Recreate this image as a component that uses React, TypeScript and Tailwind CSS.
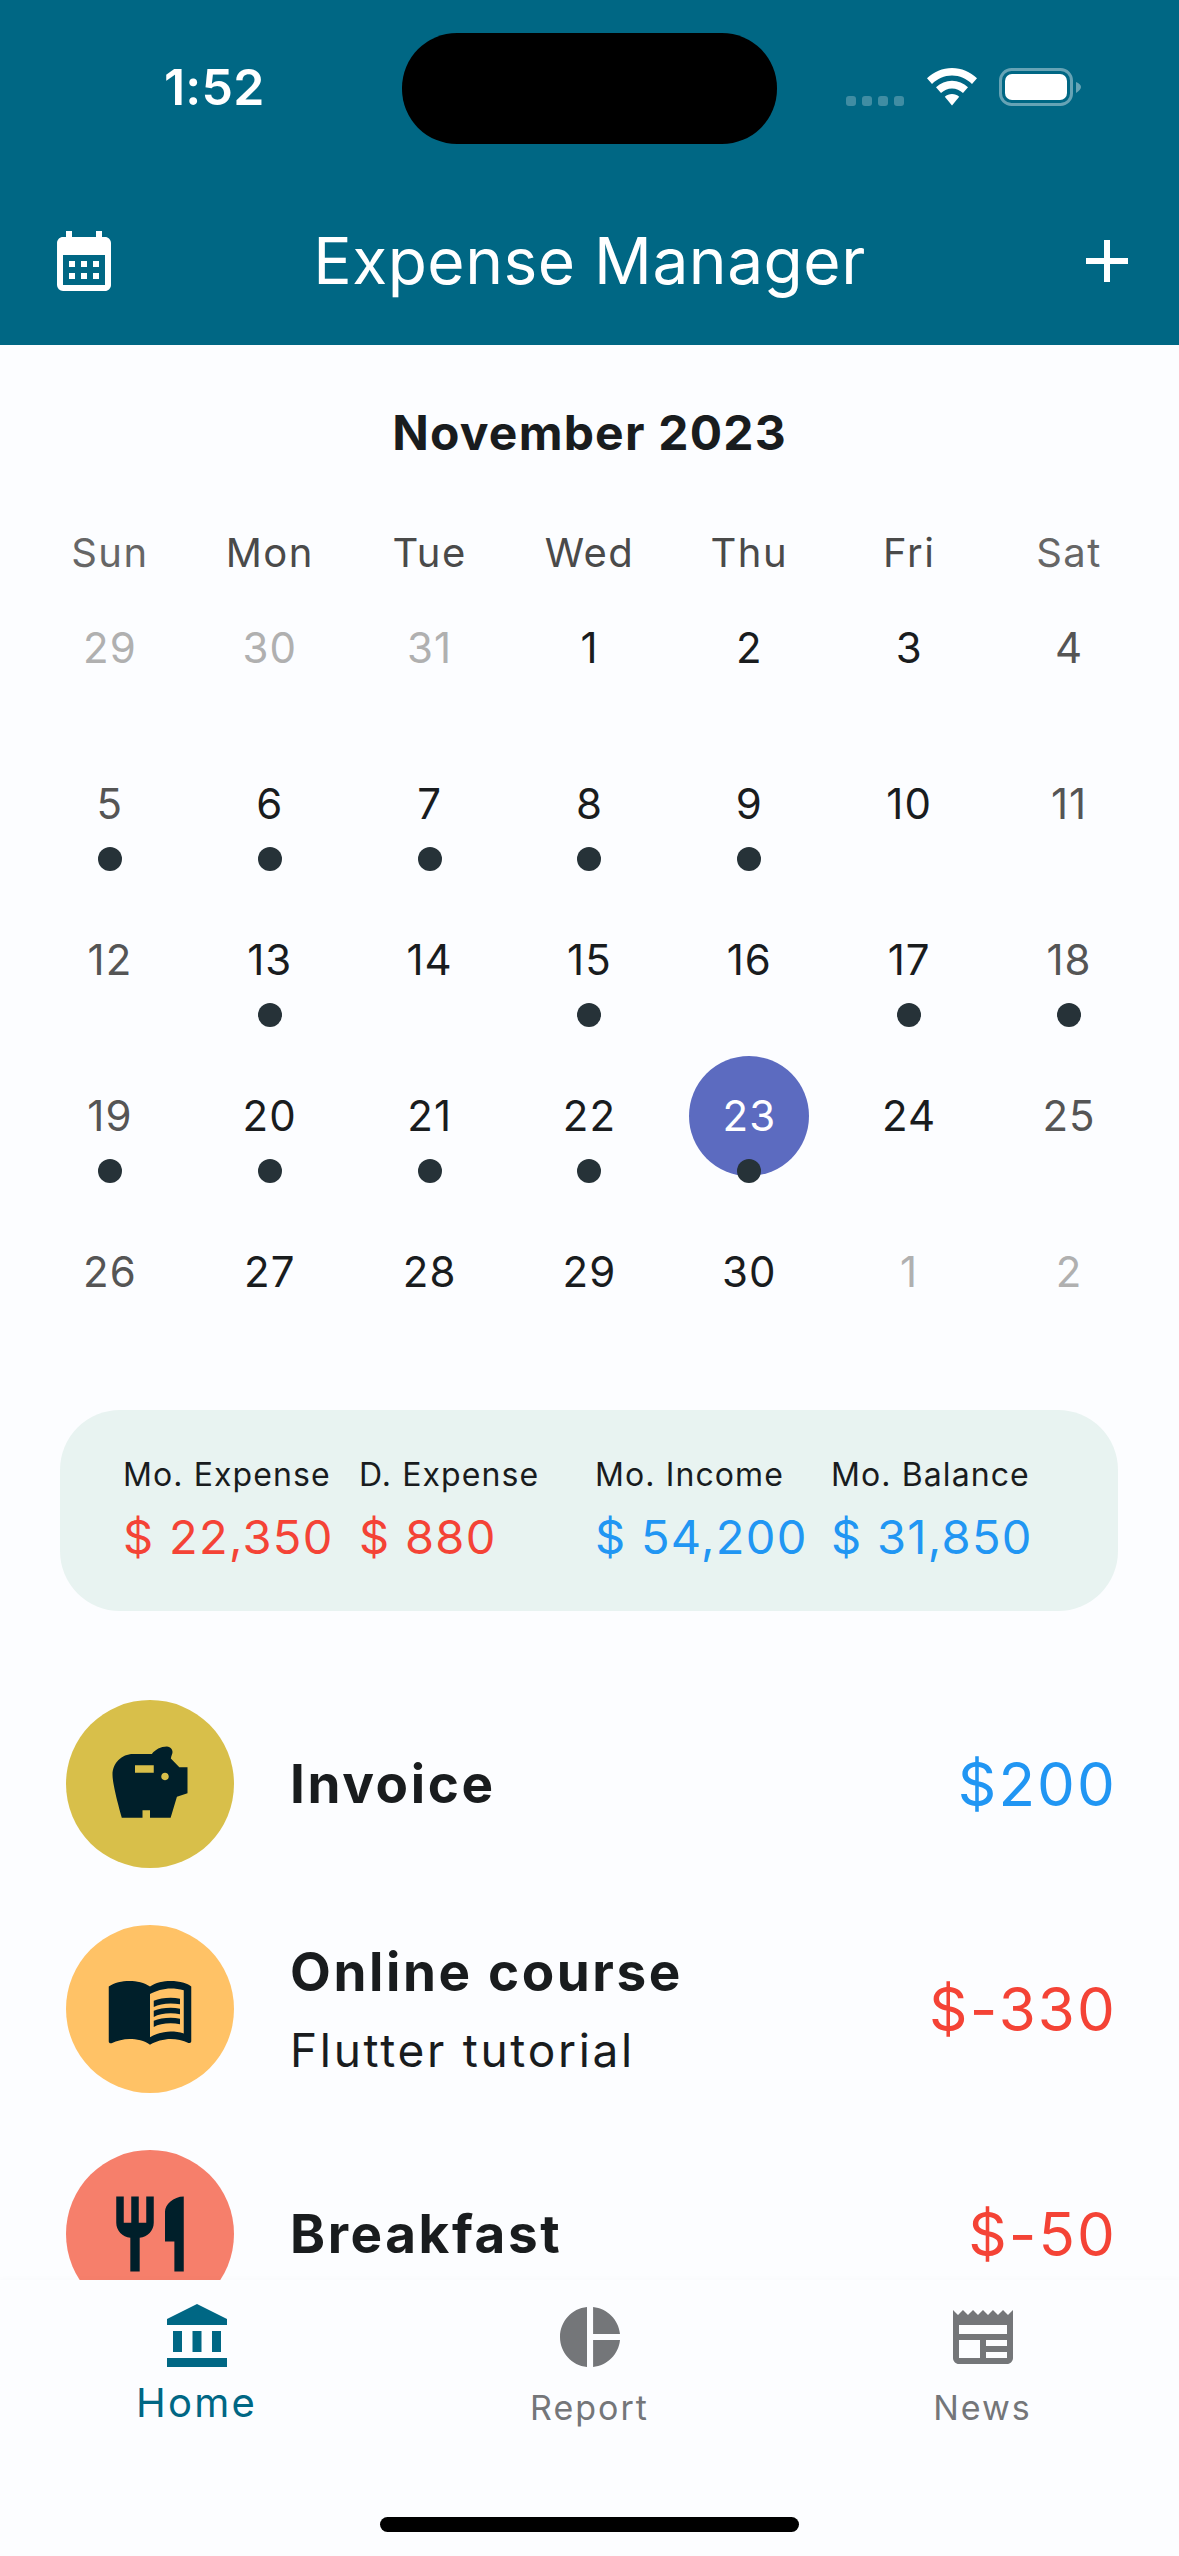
import React from "react";
import {
  MdCalendarMonth,
  MdAdd,
  MdSavings,
  MdMenuBook,
  MdRestaurant,
  MdAccountBalance,
  MdPieChart,
  MdNewspaper,
} from "react-icons/md";

const WEEK_DAYS = ["Sun", "Mon", "Tue", "Wed", "Thu", "Fri", "Sat"];

type Day = { label: string; muted?: boolean; dot?: boolean; selected?: boolean };

const DAYS: Day[] = [
  { label: "29", muted: true },
  { label: "30", muted: true },
  { label: "31", muted: true },
  { label: "1" },
  { label: "2" },
  { label: "3" },
  { label: "4" },
  { label: "5", dot: true },
  { label: "6", dot: true },
  { label: "7", dot: true },
  { label: "8", dot: true },
  { label: "9", dot: true },
  { label: "10" },
  { label: "11" },
  { label: "12" },
  { label: "13", dot: true },
  { label: "14" },
  { label: "15", dot: true },
  { label: "16" },
  { label: "17", dot: true },
  { label: "18", dot: true },
  { label: "19", dot: true },
  { label: "20", dot: true },
  { label: "21", dot: true },
  { label: "22", dot: true },
  { label: "23", dot: true, selected: true },
  { label: "24" },
  { label: "25" },
  { label: "26" },
  { label: "27" },
  { label: "28" },
  { label: "29" },
  { label: "30" },
  { label: "1", muted: true },
  { label: "2", muted: true },
];

const STATS = [
  { label: "Mo. Expense", value: "$ 22,350", color: "text-[#f44336]" },
  { label: "D. Expense", value: "$ 880", color: "text-[#f44336]" },
  { label: "Mo. Income", value: "$ 54,200", color: "text-[#2196f3]" },
  { label: "Mo. Balance", value: "$ 31,850", color: "text-[#2196f3]" },
];

const dayColor = (day: Day, index: number) => {
  if (day.selected) return "text-white";
  if (day.muted) return "text-[#b0b0b0]";
  if (index % 7 === 0 || index % 7 === 6) return "text-[#555555]";
  return "text-[#191c1e]";
};

const StatusBar = () => (
  <div className="flex h-[177px] items-center pb-[3px]">
    <span className="ml-[164px] text-[50px] font-semibold leading-none tracking-[0.2px] text-white">1:52</span>
    <div className="ml-auto mr-[98px] flex items-center">
      <div className="mt-[28px] flex gap-[6px]">
        <span className="h-[10px] w-[10px] rounded-[3px] bg-white/25" />
        <span className="h-[10px] w-[10px] rounded-[3px] bg-white/25" />
        <span className="h-[10px] w-[10px] rounded-[3px] bg-white/25" />
        <span className="h-[10px] w-[10px] rounded-[3px] bg-white/25" />
      </div>
      <svg className="ml-[23px]" width="50" height="38" viewBox="0 0 50 38" fill="none">
        <path d="M25 0C15.500 0 6.800 3.800 0 10.200L5 16C10.400 10.800 17.300 7.600 25 7.600C32.700 7.600 39.600 10.800 45 16L50 10.200C43.200 3.800 34.500 0 25 0Z" fill="white" />
        <path d="M25 12.800C19 12.800 13.500 15.200 9 19.200L14 25C17 22.200 20.800 20.400 25 20.400C29.200 20.400 33 22.200 36 25L41 19.200C36.500 15.200 31 12.800 25 12.800Z" fill="white" />
        <path d="M25 26C22.300 26 19.800 27 17.800 28.800L25 37.500L32.200 28.800C30.200 27 27.700 26 25 26Z" fill="white" />
      </svg>
      <svg className="ml-[22px]" width="82" height="38" viewBox="0 0 82 38" fill="none">
        <rect x="1.500" y="1.500" width="71" height="35" rx="11" stroke="white" strokeOpacity="0.4" strokeWidth="3" />
        <rect x="6" y="6" width="62" height="26" rx="7" fill="white" />
        <path d="M77 14C80 15 82 17 82 19C82 21 80 23 77 25Z" fill="white" fillOpacity="0.4" />
      </svg>
    </div>
  </div>
);

const AppBar = () => (
  <div className="flex h-[168px] items-center justify-between pl-[48px] pr-[36px]">
    <MdCalendarMonth size={72} className="text-white" />
    <span className="mr-[12px] text-[64px] leading-none tracking-[0.5px] text-white">Expense Manager</span>
    <MdAdd size={72} className="text-white" />
  </div>
);

const Calendar = () => (
  <div>
    <div className="flex h-[174px] items-center justify-center pt-[2px] text-[48px] font-bold tracking-[1.2px] text-[#191c1e]">
      November 2023
    </div>
    <div className="grid grid-cols-7 px-[30px]">
      {WEEK_DAYS.map((name, i) => (
        <div
          key={name}
          className={`flex h-[99px] justify-center pt-[14px] text-[40px] leading-[40px] tracking-[1.5px] ${
            i === 0 || i === 6 ? "text-[#666666]" : "text-[#4a4a4a]"
          }`}
        >
          {name}
        </div>
      ))}
      {DAYS.map((day, i) => (
        <div key={i} className="relative flex h-[156px] flex-col items-center">
          {day.selected && (
            <span className="absolute left-1/2 top-[-30px] h-[120px] w-[120px] -translate-x-1/2 rounded-full bg-[#5c6bc0]" />
          )}
          <span className={`relative h-[60px] text-[42px] leading-[60px] tracking-[1.1px] ${dayColor(day, i)}`}>
            {day.label}
          </span>
          {day.dot && <span className="relative mt-[13px] h-[24px] w-[24px] rounded-full bg-[#263238]" />}
        </div>
      ))}
    </div>
  </div>
);

const StatsCard = () => (
  <div className="ml-[60px] mr-[61px] mt-[12px] flex h-[201px] rounded-[60px] bg-[#e8f3f1] pl-[63px] pt-[45px]">
    {STATS.map((stat) => (
      <div key={stat.label} className="w-[236px] shrink-0">
        <div className="h-[40px] text-[32px] leading-[40px] tracking-[1.1px] text-[#191c1e]">{stat.label}</div>
        <div className={`mt-[12px] h-[60px] text-[47px] leading-[60px] tracking-[1.3px] ${stat.color}`}>{stat.value}</div>
      </div>
    ))}
  </div>
);

type RowProps = {
  icon: React.ReactNode;
  circle: string;
  title: string;
  subtitle?: string;
  amount: string;
  amountColor: string;
};

const Row = ({ icon, circle, title, subtitle, amount, amountColor }: RowProps) => (
  <div className="flex h-[225px] shrink-0 items-center pl-[66px] pr-[62px]">
    <div className={`flex h-[168px] w-[168px] shrink-0 items-center justify-center rounded-full text-[#001f2a] ${circle}`}>
      {icon}
    </div>
    <div className={`ml-[56px] flex-1 ${subtitle ? "mt-[5px]" : ""}`}>
      <div className="text-[53px] font-bold leading-[72px] tracking-[2.6px] text-[#191c1e]">{title}</div>
      {subtitle && <div className="mt-[6px] text-[46px] leading-[72px] tracking-[2.7px] text-[#191c1e]">{subtitle}</div>}
    </div>
    <div className={`text-[60px] leading-none tracking-[2.1px] ${amountColor}`}>{amount}</div>
  </div>
);

const NavItem = ({ icon, label, active }: { icon: React.ReactNode; label: string; active?: boolean }) => (
  <div className={`flex flex-col items-center pt-[21px] ${active ? "text-[#006784]" : "text-[#747679]"}`}>
    {icon}
    {active ? (
      <span className="mt-[10px] text-[40px] leading-[40px] tracking-[2.2px]">{label}</span>
    ) : (
      <span className="mt-[15px] text-[34px] leading-[40px] tracking-[2px]">{label}</span>
    )}
  </div>
);

export default function App() {
  return (
    <div className="relative flex h-[2556px] w-[1179px] flex-col overflow-hidden bg-[#fcfdff] font-['Inter',sans-serif]">
      <div className="h-[345px] shrink-0 bg-[#006784]">
        <StatusBar />
        <AppBar />
      </div>
      <span className="absolute left-[402px] top-[33px] h-[111px] w-[375px] rounded-[55px] bg-black" />

      <div className="min-h-0 flex-1 overflow-hidden">
        <Calendar />
        <StatsCard />
        <div className="mt-[60px] flex flex-col">
          <Row icon={<MdSavings size={90} />} circle="bg-[#d8bf4a]" title="Invoice" amount="$200" amountColor="text-[#2196f3]" />
          <Row icon={<MdMenuBook size={90} />} circle="bg-[#ffc266]" title="Online course" subtitle="Flutter tutorial" amount="$-330" amountColor="text-[#f44336]" />
          <Row icon={<MdRestaurant size={90} />} circle="bg-[#f67f6b]" title="Breakfast" amount="$-50" amountColor="text-[#f44336]" />
        </div>
      </div>

      <div className="grid h-[276px] shrink-0 grid-cols-3 bg-[#fcfdff] shadow-[0_-2px_5px_rgba(0,0,0,0.015)]">
        <NavItem icon={<MdAccountBalance size={72} />} label="Home" active />
        <NavItem icon={<MdPieChart size={72} />} label="Report" />
        <NavItem icon={<MdNewspaper size={72} />} label="News" />
      </div>
      <span className="absolute bottom-[24px] left-[380px] h-[15px] w-[419px] rounded-full bg-black" />
    </div>
  );
}
